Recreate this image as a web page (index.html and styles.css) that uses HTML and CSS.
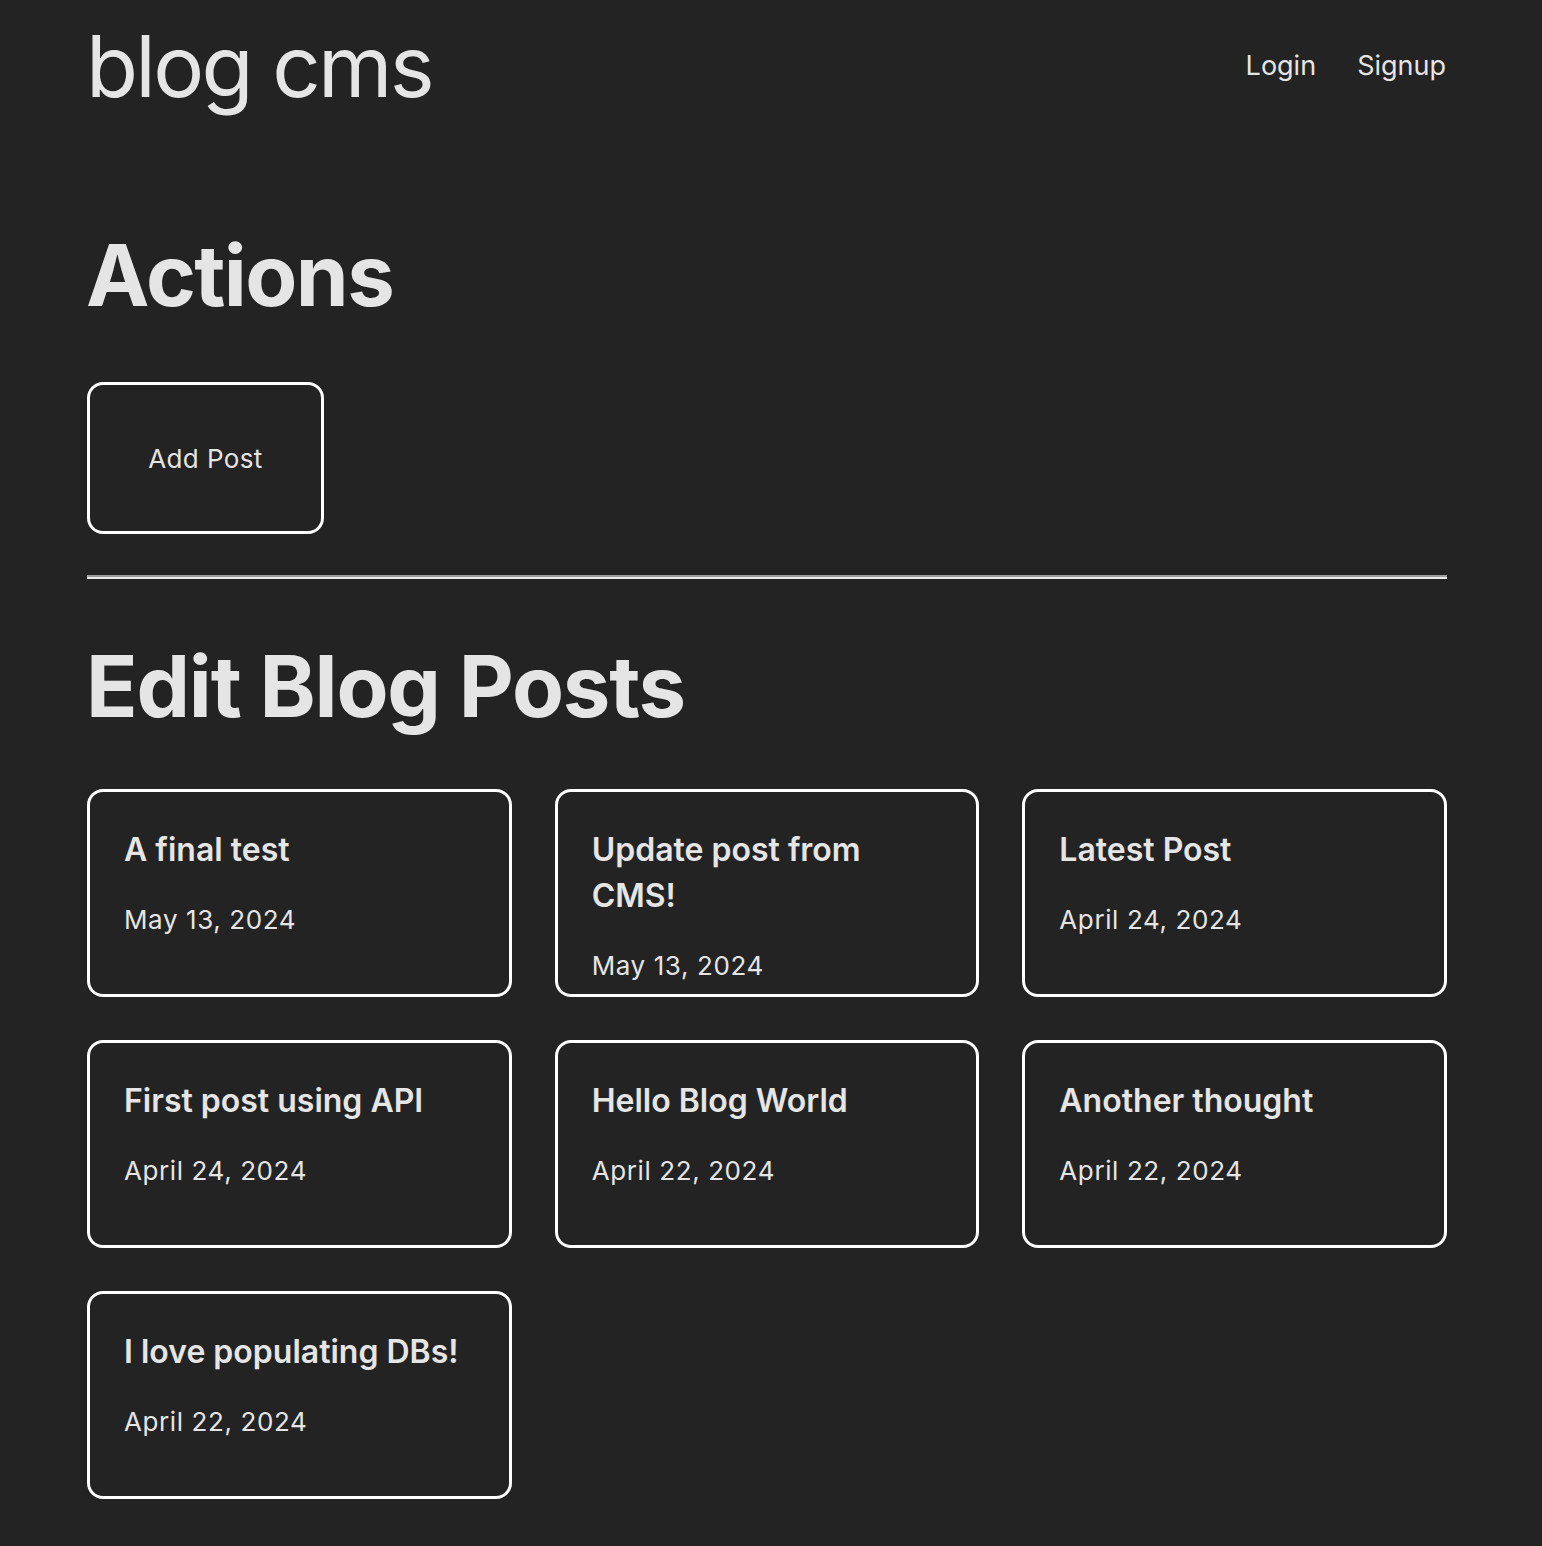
FILE: index.html
```html
<!DOCTYPE html>
<html lang="en">
<head>
<meta charset="utf-8">
<title>blog cms</title>
<link rel="stylesheet" href="styles.css">
</head>
<body>
<header class="site-header">
  <a class="brand" href="#">blog cms</a>
  <nav class="nav">
    <a href="#">Login</a>
    <a href="#">Signup</a>
  </nav>
</header>
<main>
  <h2 class="section-title actions-title">Actions</h2>
  <a class="action-btn" href="#">Add Post</a>
  <hr class="divider">
  <h2 class="section-title posts-title">Edit Blog Posts</h2>
  <div class="post-grid">
    <a class="post-card" href="#"><h3 class="post-title">A final test</h3><p class="post-date">May 13, 2024</p></a>
    <a class="post-card" href="#"><h3 class="post-title">Update post from CMS!</h3><p class="post-date">May 13, 2024</p></a>
    <a class="post-card" href="#"><h3 class="post-title">Latest Post</h3><p class="post-date">April 24, 2024</p></a>
    <a class="post-card" href="#"><h3 class="post-title">First post using API</h3><p class="post-date">April 24, 2024</p></a>
    <a class="post-card" href="#"><h3 class="post-title">Hello Blog World</h3><p class="post-date">April 22, 2024</p></a>
    <a class="post-card" href="#"><h3 class="post-title">Another thought</h3><p class="post-date">April 22, 2024</p></a>
    <a class="post-card" href="#"><h3 class="post-title">I love populating DBs!</h3><p class="post-date">April 22, 2024</p></a>
  </div>
</main>
</body>
</html>
```
FILE: styles.css
```css
html, body {
  background: #232323;
}
body {
  margin: 0;
  padding: 0 95px 48px 87px;
  font-family: Inter, "Noto Sans", "Liberation Sans", sans-serif;
  color: #e5e5e5;
}
a {
  color: inherit;
  text-decoration: none;
}
.site-header {
  display: flex;
  justify-content: space-between;
  align-items: flex-start;
  padding-top: 16px;
}
.brand {
  margin-left: -1px;
  font-size: 85px;
  line-height: 102px;
  font-weight: 400;
  letter-spacing: -2.7px;
}
.nav {
  display: flex;
  gap: 41px;
  margin-top: 34px;
  margin-right: 1px;
}
.nav a {
  font-size: 27px;
  line-height: 32px;
}
.section-title {
  margin: 0 0 0 -1px;
  font-size: 85px;
  line-height: 102px;
  font-weight: 700;
}
.actions-title {
  margin-top: 107px;
  letter-spacing: -1.6px;
}
.action-btn {
  display: flex;
  align-items: center;
  justify-content: center;
  box-sizing: border-box;
  width: 237px;
  height: 152px;
  margin-top: 55px;
  border: 3px solid #fff;
  border-radius: 16px;
  font-size: 26px;
  letter-spacing: 0.4px;
}
.divider {
  margin: 41px 0 0;
  height: 0;
  border: none;
  border-top: 2px solid #9b9b9b;
  border-bottom: 2px solid #ececec;
}
.posts-title {
  margin-top: 57px;
  letter-spacing: -1.2px;
}
.post-grid {
  display: grid;
  grid-template-columns: repeat(3, 1fr);
  gap: 43px;
  margin-top: 51px;
}
.post-card {
  display: block;
  box-sizing: border-box;
  height: 208px;
  padding: 35px 34px 0;
  border: 3px solid #fff;
  border-radius: 16px;
  overflow: hidden;
}
.post-title {
  margin: 0;
  font-size: 32px;
  line-height: 46px;
  font-weight: 600;
}
.post-date {
  margin: 32px 0 0;
  font-size: 26px;
  line-height: 30px;
  font-weight: 400;
  letter-spacing: 0.6px;
}
```
